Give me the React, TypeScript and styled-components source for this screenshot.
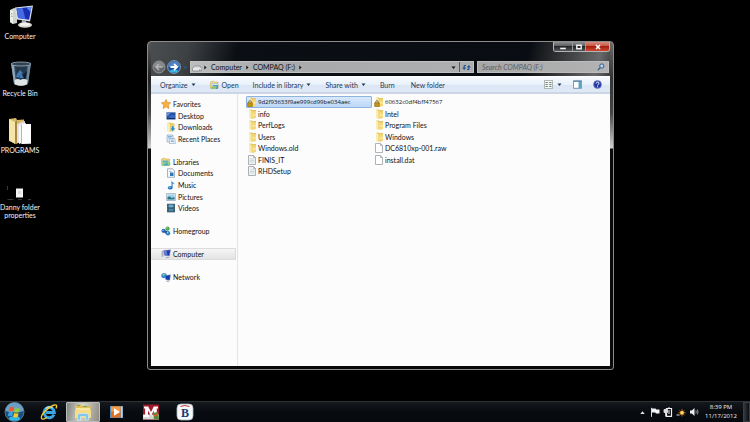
import React from "react";
import styled, { createGlobalStyle } from "styled-components";

const GlobalStyle = createGlobalStyle`
  *, *::before, *::after { box-sizing: border-box; }
  body {
    margin: 0;
    background: #000;
    color: #111;
    font-family: "Lato", "Open Sans", sans-serif;
    font-size: 7px;
    line-height: 8px;
  }
  button, input { font: inherit; color: inherit; margin: 0; padding: 0; border: 0; background: none; }
  ul { list-style: none; margin: 0; padding: 0; }
  a { color: inherit; text-decoration: none; }
  svg { display: block; flex: none; }
`;

/* ---------- layout parts ---------- */

const Screen = styled.div`
  position: relative;
  display: flex;
  flex-direction: column;
  height: 100vh;
  overflow: hidden;
  background: #000;
`;

const Desktop = styled.main`
  flex: 1;
  padding-top: 3px;
`;

const Shortcuts = styled.ul`
  width: 40px;
  display: grid;
  grid-auto-rows: 57px;
`;

const Shortcut = styled.button`
  width: 100%;
  display: flex;
  flex-direction: column;
  align-items: center;
  gap: 1px;
  color: #f4f4f4;
  white-space: pre-line;
`;

const Window = styled.section`
  position: absolute;
  left: 147px;
  right: 136px;
  top: 41px;
  bottom: 52px;
  display: flex;
  flex-direction: column;
  padding: 0 3px 3px;
  border: 1px solid #8c8c8c;
  border-radius: 4px 4px 3px 3px;
  background:
    linear-gradient(180deg, #55585b 0, #222 36px, #444 70px, #d0d0d0 106px, #0a0a0a 107px) left / 3px 100% no-repeat,
    linear-gradient(180deg, #6a6a6a 0, #333 36px, #444 70px, #d0d0d0 106px, #0a0a0a 107px) right / 3px 100% no-repeat,
    linear-gradient(105deg, #4c4f52 0, #3e4144 40px, #0b0f14 88px, #090d13 370px, #292a2c 394px, #68696a 440px, #333 100%) top / 100% 36px no-repeat,
    #080808;
`;

const TitleBar = styled.header`
  height: 18px;
  display: flex;
  justify-content: flex-end;
  align-items: flex-start;
`;

const Caption = styled.div`
  display: flex;
  border: 1px solid #b3b3b3;
  border-top: 0;
  border-radius: 0 0 3px 3px;
  overflow: hidden;
`;

const CaptionButton = styled.button<{ $w: number; $close?: boolean }>`
  width: ${p => p.$w}px;
  height: 9px;
  display: grid;
  place-items: center;
  border-left: ${p => (p.$w === 18 ? "0" : "1px solid #999")};
  background: ${p =>
    p.$close
      ? "linear-gradient(#d98b7c, #c75543 45%, #a31f0e 50%, #d0492f)"
      : "linear-gradient(#8c8d8e, #5c5d5f 45%, #242629 50%, #55575a)"};
`;

const NavBar = styled.nav`
  height: 16px;
  display: flex;
  align-items: center;
  padding: 0 1px 2px 1px;
`;

const RoundButton = styled.button<{ $gap: number }>`
  margin-right: ${p => p.$gap}px;
`;

const Address = styled.div`
  flex: 1;
  height: 12px;
  margin-right: 3px;
  display: flex;
  align-items: center;
  border: 1px solid #c2c2c2;
  background: linear-gradient(90deg, #bcbdbe, #a8a9aa 30%, #adaeaf);
`;

const Crumb = styled.button<{ $gap: number }>`
  margin-right: ${p => p.$gap}px;
  white-space: nowrap;
`;

const Refresh = styled.button`
  width: 14px;
  height: 10px;
  display: grid;
  place-items: center;
  margin-left: 3px;
  border-left: 1px solid #5c5c5c;
`;

const Search = styled.label`
  width: 132px;
  height: 12px;
  display: flex;
  align-items: center;
  padding: 0 3px 0 4px;
  border: 1px solid #bdbdbd;
  background: linear-gradient(90deg, #a6a7a8, #b3b3b3);
`;

const SearchInput = styled.input`
  flex: 1;
  min-width: 0;
  outline: 0;
  font-style: italic;
  &::placeholder { color: #5d5d5d; opacity: 1; }
`;

const Client = styled.div`
  flex: 1;
  display: flex;
  flex-direction: column;
  min-height: 0;
  background: #fcfcfd;
`;

const Toolbar = styled.div`
  height: 18px;
  display: flex;
  align-items: center;
  padding: 0 8px 0 9px;
  color: #1e395b;
  border-top: 1px solid #fff;
  border-bottom: 2px solid #cbd6e6;
  background: linear-gradient(#f8fbfe, #e8f0fa 50%, #dbe6f4 52%, #dfe9f6);
`;

const ToolButton = styled.button<{ $gap?: number }>`
  display: flex;
  align-items: center;
  gap: 3px;
  margin-right: ${p => p.$gap ?? 0}px;
  white-space: nowrap;
`;

const Spacer = styled.div`
  flex: 1;
`;

const Body = styled.div`
  flex: 1;
  display: grid;
  grid-template-columns: 87px 1fr;
  min-height: 0;
`;

const Sidebar = styled.ul`
  height: 189px;
  padding-top: 4px;
  display: grid;
  grid-template-rows: repeat(16, minmax(0, 1fr));
`;

const SidebarFrame = styled.aside`
  border-right: 1px solid #dfe6f0;
`;

const NavItem = styled.li<{ $row: number }>`
  grid-row: ${p => p.$row};
  display: grid;
`;

const NavLink = styled.a<{ $child?: boolean; $active?: boolean }>`
  display: flex;
  align-items: center;
  gap: 2px;
  margin-right: 1px;
  padding-left: ${p => (p.$child ? 15 : 10)}px;
  border: 1px solid ${p => (p.$active ? "#dcdcdc" : "transparent")};
  border-left: 0;
  border-radius: 1px;
  background: ${p => (p.$active ? "linear-gradient(#f6f6f6, #e3e3e3)" : "none")};
  white-space: nowrap;
`;

const Files = styled.ul`
  height: 83px;
  padding: 2px 0 0 8px;
  display: grid;
  grid-template-rows: repeat(7, minmax(0, 1fr));
  grid-auto-flow: column;
  grid-template-columns: 127px 127px;
  justify-content: start;
`;

const FileCell = styled.li`
  display: grid;
`;

const FileButton = styled.button<{ $selected?: boolean; $dense?: boolean }>`
  margin-right: 1px;
  display: flex;
  align-items: center;
  gap: 1px;
  border: 1px solid ${p => (p.$selected ? "#8eb4dd" : "transparent")};
  border-radius: 1px;
  background: ${p => (p.$selected ? "linear-gradient(#d9e9fc, #bcd6f6)" : "none")};
  white-space: nowrap;
  ${p => p.$dense && `font-family: "Open Sans", sans-serif; font-size: 6px;`}
`;

const Taskbar = styled.footer`
  height: 21px;
  display: flex;
  align-items: center;
  border-top: 1px solid #2d3135;
  background: linear-gradient(#14191e, #080b0f 50%, #05080c);
  padding-left: 4px;
`;

const TaskButton = styled.button<{ $active?: boolean }>`
  width: 34px;
  height: 20px;
  display: grid;
  place-items: center;
  border: ${p => (p.$active ? "1px solid #b9bcb8" : "0")};
  border-radius: 1px;
  background: ${p => (p.$active ? "linear-gradient(100deg, #7e8384, #d5d4c4 45%, #8e8c86)" : "none")};
`;

const StartButton = styled(TaskButton)`
  width: 28px;
  justify-items: start;
`;

const Tray = styled.div`
  display: flex;
  align-items: center;
  margin-left: auto;
  gap: 3px;
`;

const TrayButton = styled.button`
  width: 10px;
  display: grid;
  place-items: center;
`;

const Clock = styled.time`
  width: 38px;
  color: #eee;
  font-family: "Open Sans", sans-serif;
  font-size: 6px;
  line-height: 9px;
  text-align: center;
  white-space: pre-line;
`;

const ShowDesktop = styled.button`
  width: 7px;
  height: 20px;
  border: 1px solid #3b3f43;
  background: linear-gradient(90deg, #34383c, #0c0e11);
`;

/* ---------- icons ---------- */

const Arrow = ({ dir = "down", color = "#1e395b" }: { dir?: "down" | "right" | "up"; color?: string }) => (
  <svg width="5" height="5" viewBox="0 0 5 5">
    <path fill={color} d={dir === "down" ? "M.5 1.500h4L2.500 4z" : dir === "up" ? "M.3 4h4.400L2.500 1.300z" : "M1.300.5v4l2.200-2z"} />
  </svg>
);

const PcBig = () => (
  <svg width="28" height="28" viewBox="0 0 28 28">
    <path d="M4 7l4-2 3 1v14l-4 1-3-2z" fill="#cfd3d0" />
    <path d="M4 7l3 1v13l-3-2z" fill="#eceee9" />
    <path d="M5 10.5l1.5.5M5 13l1.5.5" stroke="#777" strokeWidth=".7" />
    <path d="M9 4.5l18-2-3 16-13-2z" fill="#d9dfec" />
    <path d="M10.500 5.500l15-1.700-2.400 13-11-1.800z" fill="#1b2fb4" />
    <path d="M10.500 5.500l6-.7 3 11.300-7.400-1.100z" fill="#476be0" />
    <path d="M20 4.300l5.500-.5-1 5.200z" fill="#5f86ea" />
    <path d="M16 17l4 .6.5 3.200-5-.3z" fill="#a9b0ba" />
    <ellipse cx="19" cy="22" rx="7" ry="2.800" fill="#d4d8d3" />
    <ellipse cx="19" cy="21.300" rx="5" ry="1.500" fill="#f4f5f0" />
  </svg>
);

const BinBig = () => (
  <svg width="28" height="28" viewBox="0 0 28 28">
    <path d="M5 3h20l-3 21q-7 4-14 0z" fill="#3c5468" />
    <path d="M5 3l3 21 2 1L8 5z" fill="#8fa5b5" />
    <path d="M25 3l-3 21-2 1L22 5z" fill="#70869a" />
    <path d="M9 6h12l-1.500 13h-9z" fill="#26394b" />
    <ellipse cx="15" cy="4" rx="10" ry="2" fill="#2f4353" stroke="#9fb0bc" strokeWidth=".8" />
    <path d="M11 14l3-4 3 3-1.500 1 2 4h-4l.5-3-1 2.500-3-.5z" fill="#3f7ab4" />
    <path d="M17 15l4-4-2 9z" fill="#101b27" />
    <path d="M8.500 20q3-2 6 0 3-2 7 0l-.8 4.500q-5.500 2.500-11.500 0z" fill="#dfe4e7" />
  </svg>
);

const FolderBig = () => (
  <svg width="28" height="28" viewBox="0 0 28 28">
    <path d="M3 2l7-1 1 2 7-.5v21l-8 3.500-7-3z" fill="#d7b866" />
    <path d="M3 2l6 3v22l-6-4z" fill="#f6e5a6" />
    <path d="M9 5l2-2v23l-2 1z" fill="#a98a42" />
    <path d="M11 7l8-3v20l-8 2z" fill="#dfe3e5" />
    <path d="M13 9l7-3v18l-7 3z" fill="#f8f8f8" />
    <path d="M15 8h8l2-1v20H15z" fill="#b3b5b6" />
    <path d="M16 7h9v19l-9 1z" fill="#fff" />
  </svg>
);

const ShortcutPage = () => (
  <svg width="28" height="28" viewBox="0 0 28 28">
    <path d="M10 14.500h7v9h-7z" fill="#f4f4f4" />
    <path d="M12 17h3v3h-3z" fill="#d5dfe8" />
    <path d="M1.500 12v4M1.500 25.500h6M12 25.500h4M22 25.500h3" stroke="#454545" strokeWidth=".8" />
  </svg>
);

const Folder = ({ lock }: { lock?: boolean }) => (
  <svg width="10" height="10" viewBox="0 0 10 10">
    <path d="M2 .8l3-.3.6.7L9 1v8l-4 .6L2 9z" fill="#e2bf55" />
    <path d="M2 .8l2.600 1V9.600L2 9z" fill="#faedb0" />
    <path d="M5 2.500L9 2v7l-4 .6z" fill="#f3d778" />
    <path d="M5.500 6h3.500" stroke="#fff2b8" strokeWidth="1" />
    {lock && (
      <g>
        <path d="M1.800 6V4.800a1.200 1.200 0 012.400 0V6" fill="none" stroke="#79683a" strokeWidth=".9" />
        <path d="M.6 5.800h4.800v3.700H.6z" fill="#c49411" stroke="#7c5c0b" strokeWidth=".5" />
      </g>
    )}
  </svg>
);

const Page = ({ lines }: { lines?: boolean }) => (
  <svg width="10" height="10" viewBox="0 0 10 10">
    <path d="M1.500.5h5l2 2v7h-7z" fill={lines ? "#f2f5f6" : "#fff"} stroke="#9aa0a5" strokeWidth=".8" />
    <path d="M6.500.5v2h2" fill="none" stroke="#9aa0a5" strokeWidth=".7" />
    {lines && <path d="M2.800 4h4.500M2.800 5.500h4.500M2.800 7h4.500" stroke="#b9cfd3" strokeWidth=".7" />}
  </svg>
);

const small: Record<string, React.ReactNode> = {
  star: <path d="M5 .4l1.400 3 3.300.4-2.400 2.300.6 3.400L5 7.800 2.100 9.500l.6-3.400L.3 3.800l3.300-.4z" fill="#f9b23e" stroke="#d97c1f" strokeWidth=".6" />,
  desktop: (
    <g>
      <path d="M.7 1.500h8.600v6.800H.7z" fill="#24509c" stroke="#5e7fae" strokeWidth=".6" />
      <path d="M1 1.800h4L2 5H1z" fill="#5a8be0" />
      <path d="M3 5.500l3-2 3 1v3.300H1z" fill="#3968c2" />
      <path d="M1 7.500h8" stroke="#16305e" />
    </g>
  ),
  downloads: (
    <g>
      <path d="M1.500.8L5 .5l.6.7H8.500v8L4 9.600 1.500 9z" fill="#e9c962" />
      <path d="M1.500.8L4 1.800v7.800L1.500 9z" fill="#faedb0" />
      <path d="M5.500 4h2.500v2.200h1.500L6.700 9.400 4 6.200h1.500z" fill="#2a8fd8" stroke="#e6f3fd" strokeWidth=".4" />
    </g>
  ),
  recent: (
    <g>
      <path d="M1 1h6v7H1z" fill="#dbe9f4" stroke="#7ea2bd" strokeWidth=".6" />
      <path d="M2 2.500h4M2 4h3" stroke="#5b9bcc" strokeWidth=".7" />
      <path d="M4 4.500h4.800l.6 5H3.400z" fill="#f3f8fc" stroke="#7793a9" strokeWidth=".5" />
      <path d="M5 6h2.500M5 7.500h3" stroke="#5e9dd0" strokeWidth=".8" />
    </g>
  ),
  libraries: (
    <g>
      <path d="M.5 2l3-1 1 1h4v5.500h-8z" fill="#f1d67c" stroke="#c9a64a" strokeWidth=".5" />
      <path d="M1.500 3.500h6v2.500h-6z" fill="#5cb6c4" />
      <path d="M.5 8.500L2 5.500h7.500L9 9H.8z" fill="#8fcb86" />
      <path d="M3 7l4-1v2.500H3z" fill="#4fa5d2" />
    </g>
  ),
  documents: (
    <g>
      <path d="M1.500.8h5l2 1.800v6.700h-7z" fill="#f4f8fb" stroke="#7b98b0" strokeWidth=".7" />
      <path d="M3 3.500h2.500" stroke="#8aa7bf" strokeWidth=".7" />
      <path d="M4 4.500h3.500v3.500H4z" fill="#3579b6" />
    </g>
  ),
  music: (
    <g>
      <path d="M5.500.5c.5 2 3 2 3.300 4.200-.8-1-1.600-1.200-2.200-1.200v4H5.500z" fill="#2f7fd0" />
      <ellipse cx="4.200" cy="7.700" rx="2.500" ry="1.800" fill="#2a6dbb" />
      <ellipse cx="3.600" cy="7.300" rx="1.100" ry=".7" fill="#86d0f0" />
    </g>
  ),
  pictures: (
    <g>
      <path d="M.6 1.500h8.800v7H.6z" fill="#e9f2f8" stroke="#7b96aa" strokeWidth=".6" />
      <path d="M1.500 2.500h7v5h-7z" fill="#9fd1ec" />
      <path d="M1.500 7.500V5l2.300-.6 2 1.600 2.700-1v2.500z" fill="#2d7685" />
    </g>
  ),
  videos: (
    <g>
      <path d="M1 .8h8v8.500H1z" fill="#24404f" />
      <path d="M2.500 1.500h5v3h-5z" fill="#68aed0" />
      <path d="M2.500 5.500h5v3h-5z" fill="#4988ad" />
      <path d="M1.700 1.500v7.500M8.300 1.500v7.500" stroke="#b8ccd6" strokeWidth=".6" strokeDasharray=".8 .8" />
    </g>
  ),
  homegroup: (
    <g>
      <circle cx="2.500" cy="4.800" r="2.100" fill="#2a62b8" />
      <circle cx="6.500" cy="2.700" r="2.100" fill="#4da546" />
      <circle cx="7" cy="7.200" r="2.200" fill="#2c86c5" />
      <circle cx="4.800" cy="6" r="1.500" fill="#25559f" />
      <circle cx="2" cy="4.200" r=".8" fill="#94c5f0" />
      <circle cx="6" cy="2" r=".7" fill="#b5e69b" />
      <circle cx="6.500" cy="6.600" r=".8" fill="#a8daf4" />
    </g>
  ),
  computer: (
    <g>
      <path d="M.6 2l1.800-.5v6L.6 8z" fill="#a9b0b8" />
      <path d="M2.500 1.500l7-.7L8.500 7l-5-.6z" fill="#1d36ae" stroke="#9fa8c2" strokeWidth=".6" />
      <path d="M3 2l2.500-.3L6.500 6l-2.600-.4z" fill="#6384e6" />
      <path d="M4 8.800q2.500-1.800 5 0z" fill="#8d949c" />
    </g>
  ),
  network: (
    <g>
      <circle cx="3" cy="3.600" r="2.700" fill="#2e87cf" />
      <path d="M1 3q2-2.500 3-1.500L3 4z" fill="#8fd3a0" />
      <path d="M4 3.500l5.500-.7-.7 5.500-4-.5z" fill="#183aab" stroke="#8ea2cc" strokeWidth=".5" />
      <path d="M5 9.500q1.700-1.500 3.500 0z" fill="#6a7480" />
    </g>
  ),
};

const SmallIcon = ({ name }: { name: string }) => (
  <svg width="10" height="10" viewBox="0 0 10 10">{small[name]}</svg>
);

/* ---------- data ---------- */

const shortcuts = [
  { label: "Computer", icon: <PcBig /> },
  { label: "Recycle Bin", icon: <BinBig /> },
  { label: "PROGRAMS", icon: <FolderBig /> },
  { label: "Danny folder\nproperties", icon: <ShortcutPage /> },
];

const places = [
  { row: 1, label: "Favorites", icon: "star" },
  { row: 2, label: "Desktop", icon: "desktop", child: true },
  { row: 3, label: "Downloads", icon: "downloads", child: true },
  { row: 4, label: "Recent Places", icon: "recent", child: true },
  { row: 6, label: "Libraries", icon: "libraries" },
  { row: 7, label: "Documents", icon: "documents", child: true },
  { row: 8, label: "Music", icon: "music", child: true },
  { row: 9, label: "Pictures", icon: "pictures", child: true },
  { row: 10, label: "Videos", icon: "videos", child: true },
  { row: 12, label: "Homegroup", icon: "homegroup" },
  { row: 14, label: "Computer", icon: "computer", active: true },
  { row: 16, label: "Network", icon: "network" },
];

const files = [
  { name: "9d2f93633f9ae999cd99be034aec", icon: <Folder lock />, selected: true, dense: true },
  { name: "info", icon: <Folder /> },
  { name: "PerfLogs", icon: <Folder /> },
  { name: "Users", icon: <Folder /> },
  { name: "Windows.old", icon: <Folder /> },
  { name: "FINIS_IT", icon: <Page lines /> },
  { name: "RHDSetup", icon: <Page lines /> },
  { name: "60632c0df4bff47567", icon: <Folder lock />, dense: true },
  { name: "Intel", icon: <Folder /> },
  { name: "Program Files", icon: <Folder /> },
  { name: "Windows", icon: <Folder /> },
  { name: "DC6810xp-001.raw", icon: <Page /> },
  { name: "install.dat", icon: <Page /> },
];

/* ---------- page ---------- */

const ExplorerWindow = () => (
  <Window aria-label="COMPAQ (F:)">
    <TitleBar>
      <Caption>
        <CaptionButton $w={18} aria-label="Minimize">
          <svg width="8" height="8" viewBox="0 0 8 8"><path d="M1 4.500h6v2H1z" fill="#f4f4f4" stroke="#333" strokeWidth=".4" /></svg>
        </CaptionButton>
        <CaptionButton $w={13} aria-label="Maximize">
          <svg width="8" height="8" viewBox="0 0 8 8"><path d="M1.800 2.200h4.400v3.600H1.800z" fill="none" stroke="#f4f4f4" strokeWidth="1.400" /></svg>
        </CaptionButton>
        <CaptionButton $w={24} $close aria-label="Close">
          <svg width="8" height="8" viewBox="0 0 8 8"><path d="M2 2l4 4M6 2L2 6" stroke="#fff" strokeWidth="1.600" /></svg>
        </CaptionButton>
      </Caption>
    </TitleBar>
    <NavBar>
      <RoundButton $gap={1} aria-label="Back">
        <svg width="14" height="14" viewBox="0 0 14 14">
          <circle cx="7" cy="7" r="6" fill="#66686b" stroke="#a2a3a4" strokeWidth=".8" />
          <path d="M1.500 7a5.500 5.500 0 0111 0z" fill="#86888a" />
          <path d="M10.500 7H4M7 4L4 7l3 3" fill="none" stroke="#b4b5b6" strokeWidth="1.600" />
        </svg>
      </RoundButton>
      <RoundButton $gap={2} aria-label="Forward">
        <svg width="14" height="14" viewBox="0 0 14 14">
          <circle cx="7" cy="7" r="6.400" fill="#1a4f9c" stroke="#9db4ca" strokeWidth=".8" />
          <path d="M1.200 7a5.800 5.800 0 0111.600 0z" fill="#4d83c4" />
          <ellipse cx="7" cy="11" rx="4" ry="1.600" fill="#35b6e8" />
          <path d="M3.500 7h6.500M7 4L10 7 7 10" fill="none" stroke="#fff" strokeWidth="1.800" />
        </svg>
      </RoundButton>
      <RoundButton $gap={2} aria-label="Recent pages"><Arrow color="#1d6396" /></RoundButton>
      <Address>
        <Crumb $gap={1} aria-label="Drive">
          <svg width="11" height="10" viewBox="0 0 11 10">
            <path d="M3 4h6l1.500 3v2h-9V7z" fill="#d9dadb" stroke="#77797b" strokeWidth=".6" />
            <path d="M2 7h8.500" stroke="#fff" strokeWidth=".8" />
            <path d="M8 8h1.500" stroke="#3a8a3a" strokeWidth=".8" />
          </svg>
        </Crumb>
        <Crumb $gap={3} aria-label="Roots"><Arrow dir="right" color="#111" /></Crumb>
        <Crumb $gap={3}>Computer</Crumb>
        <Crumb $gap={3} aria-label="Drives"><Arrow dir="right" color="#111" /></Crumb>
        <Crumb $gap={3}>COMPAQ (F:)</Crumb>
        <Crumb $gap={0} aria-label="Folders"><Arrow dir="right" color="#111" /></Crumb>
        <Spacer />
        <Crumb $gap={0} aria-label="Previous locations"><Arrow color="#111" /></Crumb>
        <Refresh aria-label="Refresh">
          <svg width="9" height="9" viewBox="0 0 9 9">
            <path d="M4 2.500H2.200v3M.8 4.500l1.400 1.700 1.400-1.700M5 6.500h1.800v-3M5.400 4.500l1.400-1.700 1.400 1.700" fill="none" stroke="#1f5699" strokeWidth="1.100" />
          </svg>
        </Refresh>
      </Address>
      <Search>
        <SearchInput placeholder="Search COMPAQ (F:)" aria-label="Search COMPAQ (F:)" />
        <svg width="8" height="8" viewBox="0 0 8 8">
          <circle cx="4.800" cy="3" r="2.100" fill="#c5d3e2" stroke="#24558e" strokeWidth=".9" />
          <path d="M3.300 4.600L.8 7.200" stroke="#24558e" strokeWidth="1.200" />
        </svg>
      </Search>
    </NavBar>
    <Client>
      <Toolbar>
        <ToolButton $gap={14}>Organize <Arrow /></ToolButton>
        <ToolButton $gap={14}>
          <svg width="9" height="10" viewBox="0 0 9 10">
            <path d="M.5 2l3-1 .7 1H8v6H.5z" fill="#f3dc8c" stroke="#c7a850" strokeWidth=".5" />
            <path d="M2 3.500h6V8H2z" fill="#d8eaf5" stroke="#7fa4c2" strokeWidth=".4" />
            <path d="M3 5h5v4H3z" fill="#4f9cbf" />
            <path d="M.5 8.500L2.500 6h4L6 9H.8z" fill="#95c36c" />
          </svg>
          Open
        </ToolButton>
        <ToolButton $gap={14}>Include in library <Arrow /></ToolButton>
        <ToolButton $gap={14}>Share with <Arrow /></ToolButton>
        <ToolButton $gap={16}>Burn</ToolButton>
        <ToolButton>New folder</ToolButton>
        <Spacer />
        <ToolButton $gap={4} aria-label="Change view">
          <svg width="9" height="9" viewBox="0 0 9 9">
            <path d="M.4.400h8.200v8.200H.4z" fill="#f3f6f4" stroke="#8c9792" strokeWidth=".7" />
            <path d="M1.500 2.500h2.300M5.200 2.500h2.300M1.500 4.500h2.300M5.200 4.500h2.300M1.500 6.500h2.300M5.200 6.500h2.300" stroke="#6f8580" strokeWidth="1" />
          </svg>
        </ToolButton>
        <ToolButton $gap={11} aria-label="More views"><Arrow /></ToolButton>
        <ToolButton $gap={11} aria-label="Show the preview pane">
          <svg width="9" height="9" viewBox="0 0 9 9">
            <path d="M.4.800h8.200v7.500H.4z" fill="#fff" stroke="#4f7fa3" strokeWidth=".8" />
            <path d="M.4 1.300h8.200" stroke="#4f7fa3" strokeWidth="1" />
            <path d="M5.500 2h2.700v6H5.500z" fill="#5ca6bb" />
          </svg>
        </ToolButton>
        <ToolButton aria-label="Help">
          <svg width="9" height="9" viewBox="0 0 10 10">
            <circle cx="5" cy="5" r="4.400" fill="#2434a4" stroke="#7d8bc8" strokeWidth=".8" />
            <path d="M3.500 3.800c0-2 3.200-1.900 3.200-.1 0 1.100-1.600 1.100-1.600 2.400M5.100 7v1.100" fill="none" stroke="#fff" strokeWidth="1.100" />
          </svg>
        </ToolButton>
      </Toolbar>
      <Body>
        <SidebarFrame>
          <Sidebar>
            {places.map(p => (
              <NavItem key={p.label} $row={p.row}>
                <NavLink href="#" $child={p.child} $active={p.active}>
                  <SmallIcon name={p.icon} />
                  {p.label}
                </NavLink>
              </NavItem>
            ))}
          </Sidebar>
        </SidebarFrame>
        <Files>
          {files.map(f => (
            <FileCell key={f.name}>
              <FileButton $selected={f.selected} $dense={f.dense}>{f.icon}{f.name}</FileButton>
            </FileCell>
          ))}
        </Files>
      </Body>
    </Client>
  </Window>
);

const TaskbarRow = () => (
  <Taskbar>
    <StartButton aria-label="Start">
      <svg width="21" height="20" viewBox="0 0 21 20">
        <circle cx="10.500" cy="10" r="9.500" fill="#1c4f7c" stroke="#5f87a5" strokeWidth=".8" />
        <path d="M1.500 9a9 8.500 0 0118 0q-9 3-18 0z" fill="#6e9fc0" />
        <ellipse cx="10.500" cy="16.500" rx="5.500" ry="2.300" fill="#37b3dd" />
        <path d="M5.500 5.600q2.400-1.300 4.600 0l-.8 4q-2.100-1-4.500 0z" fill="#ef5a2a" />
        <path d="M10.900 6q2.200 1.100 4.700 0l-.8 4q-2.400 1-4.600 0z" fill="#93cb3e" />
        <path d="M4.600 10.400q2.400-1 4.500 0l-.8 3.900q-2.100-1.100-4.500 0z" fill="#39a5e6" />
        <path d="M10 10.900q2.200 1 4.600 0l-.8 3.800q-2.300 1.100-4.600 0z" fill="#fbc928" />
      </svg>
    </StartButton>
    <TaskButton aria-label="Internet Explorer">
      <svg width="18" height="18" viewBox="0 0 20 20">
        <path d="M15.500 13a5.800 5.800 0 11.500-2.500H6.500" fill="none" stroke="#3aa6e6" strokeWidth="3.200" />
        <path d="M6 6q4-3.500 8-.5" fill="none" stroke="#aee8fb" strokeWidth="1.200" />
        <path d="M2 17.500C-.5 14 9 4.500 15 2.500c4-1.300 4 1 2.700 3.500M2 17.500c1.300 1 4-.2 5.500-1.300" fill="none" stroke="#f6cc38" strokeWidth="1.500" />
      </svg>
    </TaskButton>
    <TaskButton $active aria-label="Windows Explorer">
      <svg width="20" height="18" viewBox="0 0 20 18">
        <path d="M2 2.500l6-.8 1 1.300h8.500v12H2z" fill="#e4bd59" />
        <path d="M3 5h14v10H3z" fill="#f9e7a0" />
        <path d="M4 2.500h3M10 3.500h4" stroke="#67a85b" strokeWidth="1" />
        <path d="M2 7h16v8H2z" fill="#f6dc87" />
        <path d="M4.500 17v-4.500q0-2 2-2h7q2 0 2 2V17h-3v-3.500h-5V17z" fill="#82c6e8" stroke="#d9f0fa" strokeWidth=".6" />
      </svg>
    </TaskButton>
    <TaskButton aria-label="Media Player">
      <svg width="16" height="16" viewBox="0 0 16 16">
        <path d="M1 2h13v12H1z" fill="#5a8bb8" />
        <path d="M2 2.500h9.500v11H2z" fill="#e2711c" />
        <path d="M2 2.500h9.500v5H2z" fill="#f29b49" />
        <path d="M5 4.300l6 3.700-6 3.700z" fill="#fff" />
        <path d="M12 2.500h1.500v11H12z" fill="#b8d7ef" />
      </svg>
    </TaskButton>
    <TaskButton aria-label="Mail">
      <svg width="18" height="16" viewBox="0 0 18 16">
        <path d="M1 .5h16v15H1z" fill="#a1182a" />
        <path d="M1 10.500h16v5H1z" fill="#d7d6d2" />
        <path d="M1.500 13V11h1.600V4.500H2V2.500h4.200L9 8l2.800-5.500H16v2h-1.200V11H16v2h-5.200v-2h1V6.500L9 12 6 6.500V11h1v2z" fill="#fff" />
        <path d="M11 9l5-1 1 7h-5z" fill="#4c8c35" />
        <path d="M12 12l4-2" stroke="#e55d2b" strokeWidth="1.500" />
      </svg>
    </TaskButton>
    <TaskButton aria-label="B">
      <svg width="18" height="18" viewBox="0 0 18 18">
        <rect x="1" y="1" width="16" height="16" rx="4" fill="#f6f8fa" stroke="#a9b7c6" strokeWidth=".8" />
        <path d="M4.500 3.500q4-2 9 0" fill="none" stroke="#c8323b" strokeWidth="1" />
        <text x="9" y="13.500" textAnchor="middle" fontFamily="Liberation Serif, serif" fontSize="12" fontWeight="700" fill="#173b77">B</text>
      </svg>
    </TaskButton>
    <Tray>
      <TrayButton aria-label="Show hidden icons"><Arrow dir="up" color="#e5e5e5" /></TrayButton>
      <TrayButton aria-label="Action Center">
        <svg width="10" height="10" viewBox="0 0 10 10"><path d="M1.500.8v9" stroke="#ddd" strokeWidth="1" /><path d="M2 1.500h3.500l.8 1H9.500v4H6l-.8-1H2z" fill="#f4f4f4" /></svg>
      </TrayButton>
      <TrayButton aria-label="Power">
        <svg width="10" height="10" viewBox="0 0 10 10">
          <path d="M3.500 1.500h5v7.800h-5z" fill="none" stroke="#eee" strokeWidth="1.200" />
          <path d="M5 1h2M5 4h2M5 6h2" stroke="#eee" strokeWidth="1.200" />
          <path d="M1 2.500h3.500v3H1zM2.500 5v4.500" stroke="#ddd" fill="#ddd" strokeWidth=".9" />
        </svg>
      </TrayButton>
      <TrayButton aria-label="Network">
        <svg width="10" height="10" viewBox="0 0 10 10">
          <path d="M.5 7.500h3v1h-3z" fill="#ddd" />
          <circle cx="6" cy="5.800" r="2" fill="#ffc347" />
          <path d="M6 2v7.500M2.200 5.800h7.600M3.500 3.300l5 5M8.500 3.300l-5 5" stroke="#e68a12" strokeWidth=".7" />
          <circle cx="6" cy="5.800" r="1.300" fill="#ffe07d" />
        </svg>
      </TrayButton>
      <TrayButton aria-label="Volume">
        <svg width="10" height="10" viewBox="0 0 10 10">
          <path d="M1 3.500h1.800L5.500 1v8L2.800 6.500H1z" fill="#eee" />
          <path d="M6.800 3.500q1 1.500 0 3M8.300 2.500q1.600 2.500 0 5" fill="none" stroke="#bbb" strokeWidth=".8" />
        </svg>
      </TrayButton>
      <Clock>{"8:39 PM\n11/17/2012"}</Clock>
      <ShowDesktop aria-label="Show desktop" />
    </Tray>
  </Taskbar>
);

export default function App() {
  return (
    <>
      <GlobalStyle />
      <Screen>
        <Desktop>
          <Shortcuts>
            {shortcuts.map(s => (
              <li key={s.label}>
                <Shortcut>{s.icon}{s.label}</Shortcut>
              </li>
            ))}
          </Shortcuts>
          <ExplorerWindow />
        </Desktop>
        <TaskbarRow />
      </Screen>
    </>
  );
}
